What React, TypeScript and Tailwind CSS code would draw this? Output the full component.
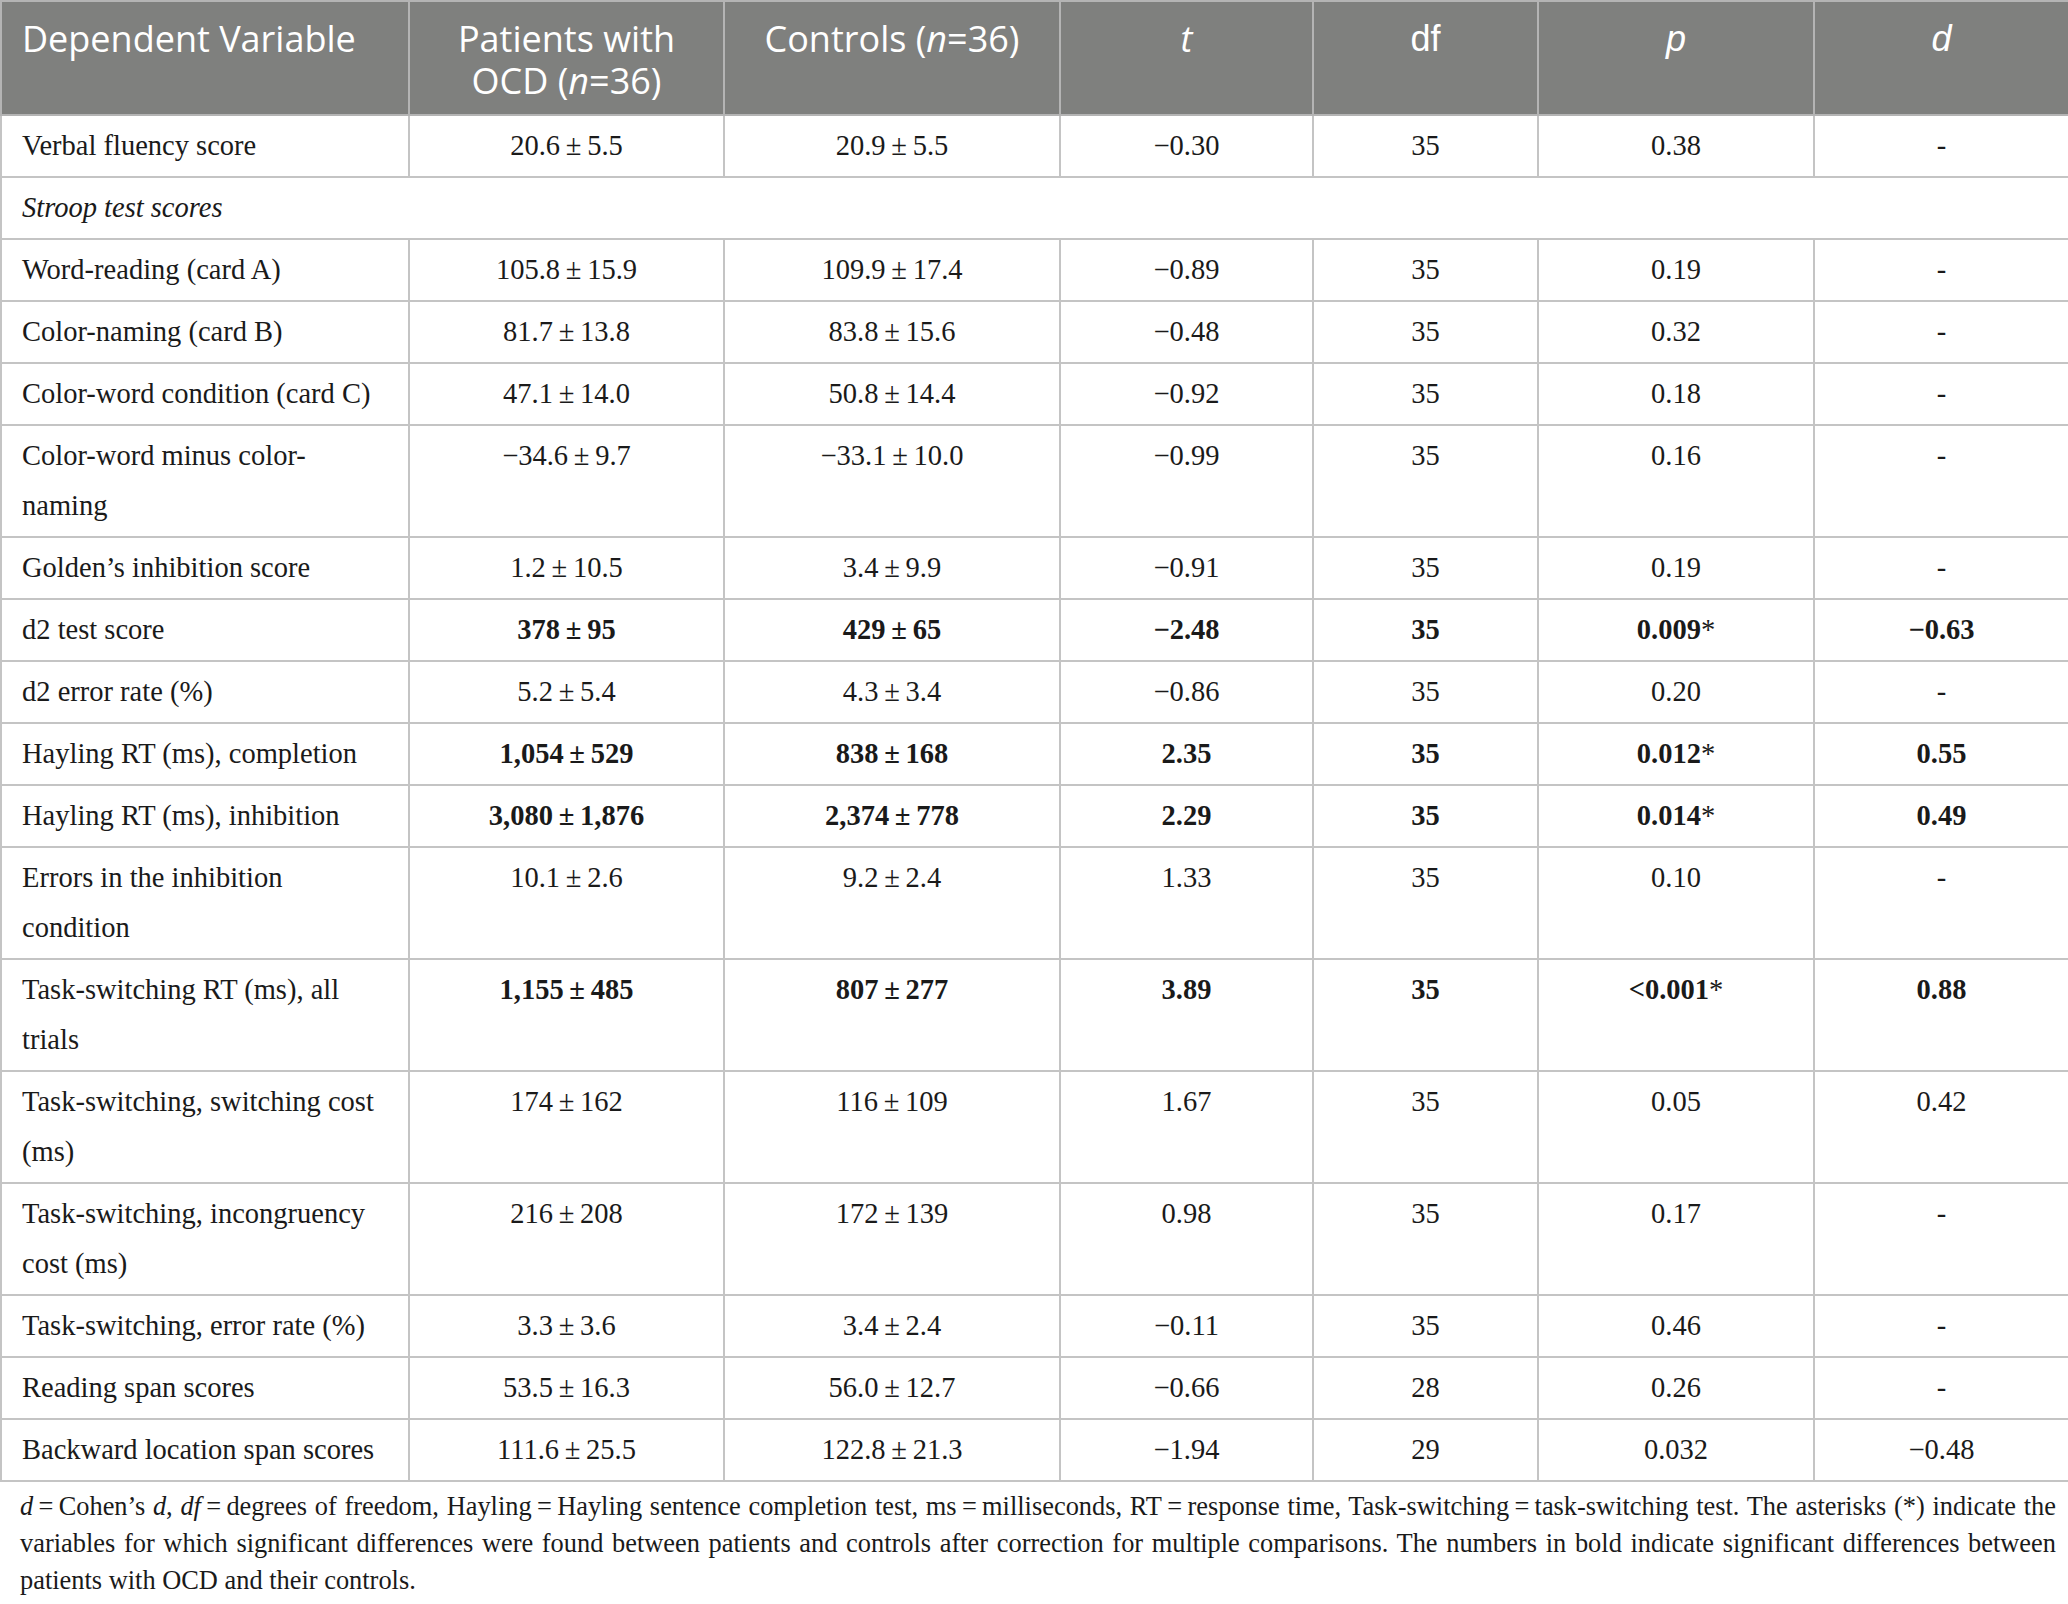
import React from 'react';

const pm = (a: string, b: string) => `${a}\u2009±\u2009${b}`;
const eq = '\u2009=\u2009';

const star = (v: string) => (
    <>
        {v}
        <span className="font-normal">*</span>
    </>
);

const rows: { label: React.ReactNode; cells: React.ReactNode[]; bold?: boolean }[] = [
    { label: 'Verbal fluency score', cells: [pm('20.6', '5.5'), pm('20.9', '5.5'), '−0.30', '35', '0.38', '-'] },
    { label: 'Word-reading (card A)', cells: [pm('105.8', '15.9'), pm('109.9', '17.4'), '−0.89', '35', '0.19', '-'] },
    { label: 'Color-naming (card B)', cells: [pm('81.7', '13.8'), pm('83.8', '15.6'), '−0.48', '35', '0.32', '-'] },
    { label: 'Color-word condition (card C)', cells: [pm('47.1', '14.0'), pm('50.8', '14.4'), '−0.92', '35', '0.18', '-'] },
    { label: <>Color-word minus color-<br />naming</>, cells: [pm('−34.6', '9.7'), pm('−33.1', '10.0'), '−0.99', '35', '0.16', '-'] },
    { label: 'Golden’s inhibition score', cells: [pm('1.2', '10.5'), pm('3.4', '9.9'), '−0.91', '35', '0.19', '-'] },
    { label: 'd2 test score', bold: true, cells: [pm('378', '95'), pm('429', '65'), '−2.48', '35', star('0.009'), '−0.63'] },
    { label: 'd2 error rate (%)', cells: [pm('5.2', '5.4'), pm('4.3', '3.4'), '−0.86', '35', '0.20', '-'] },
    { label: 'Hayling RT (ms), completion', bold: true, cells: [pm('1,054', '529'), pm('838', '168'), '2.35', '35', star('0.012'), '0.55'] },
    { label: 'Hayling RT (ms), inhibition', bold: true, cells: [pm('3,080', '1,876'), pm('2,374', '778'), '2.29', '35', star('0.014'), '0.49'] },
    { label: <>Errors in the inhibition<br />condition</>, cells: [pm('10.1', '2.6'), pm('9.2', '2.4'), '1.33', '35', '0.10', '-'] },
    { label: <>Task-switching RT (ms), all<br />trials</>, bold: true, cells: [pm('1,155', '485'), pm('807', '277'), '3.89', '35', star('<0.001'), '0.88'] },
    { label: <>Task-switching, switching cost<br />(ms)</>, cells: [pm('174', '162'), pm('116', '109'), '1.67', '35', '0.05', '0.42'] },
    { label: <>Task-switching, incongruency<br />cost (ms)</>, cells: [pm('216', '208'), pm('172', '139'), '0.98', '35', '0.17', '-'] },
    { label: 'Task-switching, error rate (%)', cells: [pm('3.3', '3.6'), pm('3.4', '2.4'), '−0.11', '35', '0.46', '-'] },
    { label: 'Reading span scores', cells: [pm('53.5', '16.3'), pm('56.0', '12.7'), '−0.66', '28', '0.26', '-'] },
    { label: 'Backward location span scores', cells: [pm('111.6', '25.5'), pm('122.8', '21.3'), '−1.94', '29', '0.032', '−0.48'] },
];

const td = 'border-2 border-[#c4c4c4] align-top pt-[5px] pb-[5px] leading-[50px]';
const th = 'border-2 border-[#b4b4b4] align-top pt-[16px] font-normal leading-[42px] text-[36px]';

export default function App() {
    return (
        <div className="w-[2068px] bg-white text-[#1a1a1a] font-['Liberation_Serif',serif]">
            <table className="w-[2068px] table-fixed border-collapse text-[28.5px]">
                <colgroup>
                    <col className="w-[408px]" />
                    <col className="w-[315px]" />
                    <col className="w-[336px]" />
                    <col className="w-[253px]" />
                    <col className="w-[225px]" />
                    <col className="w-[276px]" />
                    <col className="w-[255px]" />
                </colgroup>
                <thead>
                    <tr className="h-[114px] bg-[#7f807e] text-white">
                        <th className={`${th} pl-[20px] text-left font-['Open_Sans',sans-serif]`}>Dependent Variable</th>
                        <th className={`${th} text-center font-['Open_Sans',sans-serif]`}>
                            Patients with<br />OCD (<i>n</i>=36)
                        </th>
                        <th className={`${th} text-center font-['Open_Sans',sans-serif]`}>
                            Controls (<i>n</i>=36)
                        </th>
                        <th className={`${th} text-center font-['Open_Sans',sans-serif]`}>
                            <i>t</i>
                        </th>
                        <th className={`${th} text-center font-['Liberation_Sans',sans-serif]`}>df</th>
                        <th className={`${th} text-center font-['Liberation_Sans',sans-serif]`}>
                            <i>p</i>
                        </th>
                        <th className={`${th} text-center font-['Liberation_Sans',sans-serif]`}>
                            <i>d</i>
                        </th>
                    </tr>
                </thead>
                <tbody>
                    {rows.map((r, i) => (
                        <React.Fragment key={i}>
                            <tr>
                                <td className={`${td} pl-[20px] pr-[8px] text-left`}>{r.label}</td>
                                {r.cells.map((c, j) => (
                                    <td key={j} className={`${td} text-center ${r.bold ? 'font-bold' : ''}`}>
                                        {c}
                                    </td>
                                ))}
                            </tr>
                            {i === 0 && (
                                <tr>
                                    <td colSpan={7} className={`${td} pl-[20px] text-left italic`}>
                                        Stroop test scores
                                    </td>
                                </tr>
                            )}
                        </React.Fragment>
                    ))}
                </tbody>
            </table>
            <div className="mt-[6px] pl-[20px] pr-[12px] text-[26.4px] leading-[37px]">
                <div className="text-justify [text-align-last:justify]">
                    <i>d</i>{eq}Cohen’s <i>d</i>, <i>df</i>{eq}degrees of freedom, Hayling{eq}Hayling sentence completion test, ms{eq}milliseconds, RT{eq}response time, Task-switching{eq}task-switching test. The asterisks (*) indicate the
                </div>
                <div className="text-justify [text-align-last:justify]">
                    variables for which significant differences were found between patients and controls after correction for multiple comparisons. The numbers in bold indicate significant differences between
                </div>
                <div>patients with OCD and their controls.</div>
            </div>
        </div>
    );
}
